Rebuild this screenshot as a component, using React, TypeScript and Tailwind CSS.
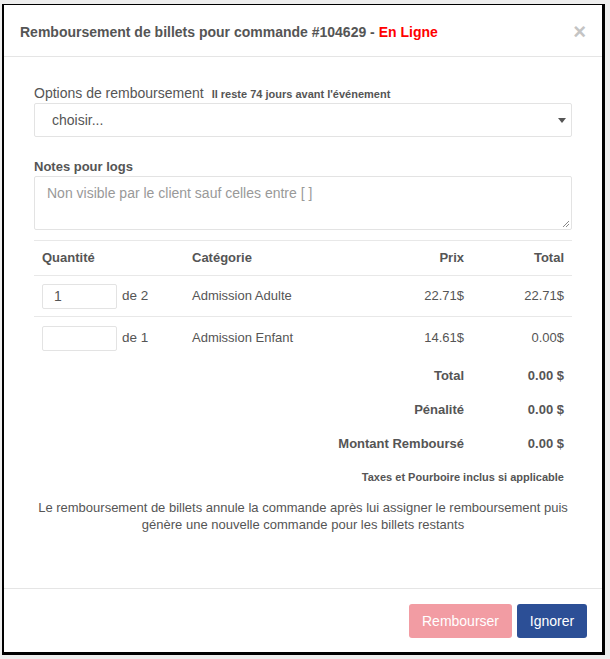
import React from 'react';

const rows = [
  { qty: '1', max: 2, category: 'Admission Adulte', price: '22.71$', total: '22.71$' },
  { qty: '', max: 1, category: 'Admission Enfant', price: '14.61$', total: '0.00$' },
];

const summary = [
  { label: 'Total', value: '0.00 $' },
  { label: 'Pénalité', value: '0.00 $' },
  { label: 'Montant Remboursé', value: '0.00 $' },
];

function App() {
  return (
    <div className="w-[610px] h-[659px] bg-[#eeeeee] pt-[4px] pb-[4px] pl-[2px] pr-[5px] font-['Liberation_Sans',Arial,sans-serif] text-[#555555]">
      <div className="h-full flex flex-col bg-white border-t-[1.5px] border-l-[2px] border-b-[3px] border-r-[3px] border-black">
        {/* Header */}
        <div className="h-[52px] shrink-0 flex items-center justify-between pl-[16px] pr-[16px] pt-[3px] border-b border-[#e5e5e5]">
          <h4 className="text-[14px] font-bold text-[#555555]">
            Remboursement de billets pour commande #104629 - <span className="text-[#ff0000]">En Ligne</span>
          </h4>
          <span className="text-[22px] leading-none font-bold text-[#c4c4c4]">×</span>
        </div>

        {/* Body */}
        <div className="flex-1 px-[30px] pt-[28px]">
          <div className="flex items-baseline gap-[8px] leading-[17px]">
            <span className="text-[14px]">Options de remboursement</span>
            <span className="text-[11px] font-bold">Il reste 74 jours avant l'événement</span>
          </div>
          <div className="h-[34px] border border-[#e3e3e3] rounded-[2px] flex items-center justify-between pl-[17px] pr-[5px] text-[14px]">
            <span>choisir...</span>
            <svg width="8" height="5" viewBox="0 0 8 5">
              <path d="M0 0 H8 L4 5 Z" fill="#555" />
            </svg>
          </div>

          <div className="mt-[21px] text-[13px] font-bold leading-[17px]">Notes pour logs</div>
          <div className="relative mt-[1px] h-[54px] border border-[#e3e3e3] rounded-[2px] pl-[12px] pt-[6px] text-[14px] text-[#999999]">
            Non visible par le client sauf celles entre [ ]
            <svg className="absolute right-[1px] bottom-[1px]" width="9" height="9" viewBox="0 0 9 9">
              <path d="M8 2 L2 8 M8 5 L5 8" stroke="#888" strokeWidth="1" />
            </svg>
          </div>

          {/* Table */}
          <div className="mt-[10px] border-t border-[#e8e8e8] text-[13px]">
            <div className="h-[35px] flex items-center font-bold border-b border-[#e8e8e8]">
              <div className="w-[158px] pl-[8px]">Quantité</div>
              <div className="flex-1">Catégorie</div>
              <div className="w-[100px] text-right">Prix</div>
              <div className="w-[108px] text-right pr-[8px]">Total</div>
            </div>
            {rows.map((r, i) => (
              <div
                key={r.category}
                className={`flex items-center ${i === 0 ? 'h-[41px] border-b border-[#e8e8e8]' : 'h-[42px]'}`}
              >
                <div className="w-[158px] pl-[8px] flex items-center gap-[5px]">
                  <div className="w-[75px] h-[25px] border border-[#e3e3e3] rounded-[2px] pl-[11px] flex items-center text-[14px]">
                    {r.qty}
                  </div>
                  <span className="text-[13.5px]">de {r.max}</span>
                </div>
                <div className="flex-1">{r.category}</div>
                <div className="w-[100px] text-right">{r.price}</div>
                <div className="w-[108px] text-right pr-[8px]">{r.total}</div>
              </div>
            ))}
            {summary.map((s) => (
              <div key={s.label} className="h-[34px] flex items-center font-bold">
                <div className="flex-1 text-right">{s.label}</div>
                <div className="w-[108px] text-right pr-[8px]">{s.value}</div>
              </div>
            ))}
          </div>

          <div className="mt-[8px] text-right pr-[8px] text-[11px] font-bold">
            Taxes et Pourboire inclus si applicable
          </div>
          <p className="mt-[13px] text-center text-[13px] leading-[17px]">
            Le remboursement de billets annule la commande après lui assigner le remboursement puis génère une nouvelle commande pour les billets restants
          </p>
        </div>

        {/* Footer */}
        <div className="h-[64px] shrink-0 border-t border-[#e5e5e5] flex items-center justify-end gap-[5px] pr-[15px] pt-[1px]">
          <button className="w-[103px] h-[34px] rounded-[3px] bg-[#f29ca3] text-white text-[14px]">
            Rembourser
          </button>
          <button className="w-[70px] h-[34px] rounded-[3px] bg-[#2c4f96] text-white text-[14px]">
            Ignorer
          </button>
        </div>
      </div>
    </div>
  );
}

export default App;
